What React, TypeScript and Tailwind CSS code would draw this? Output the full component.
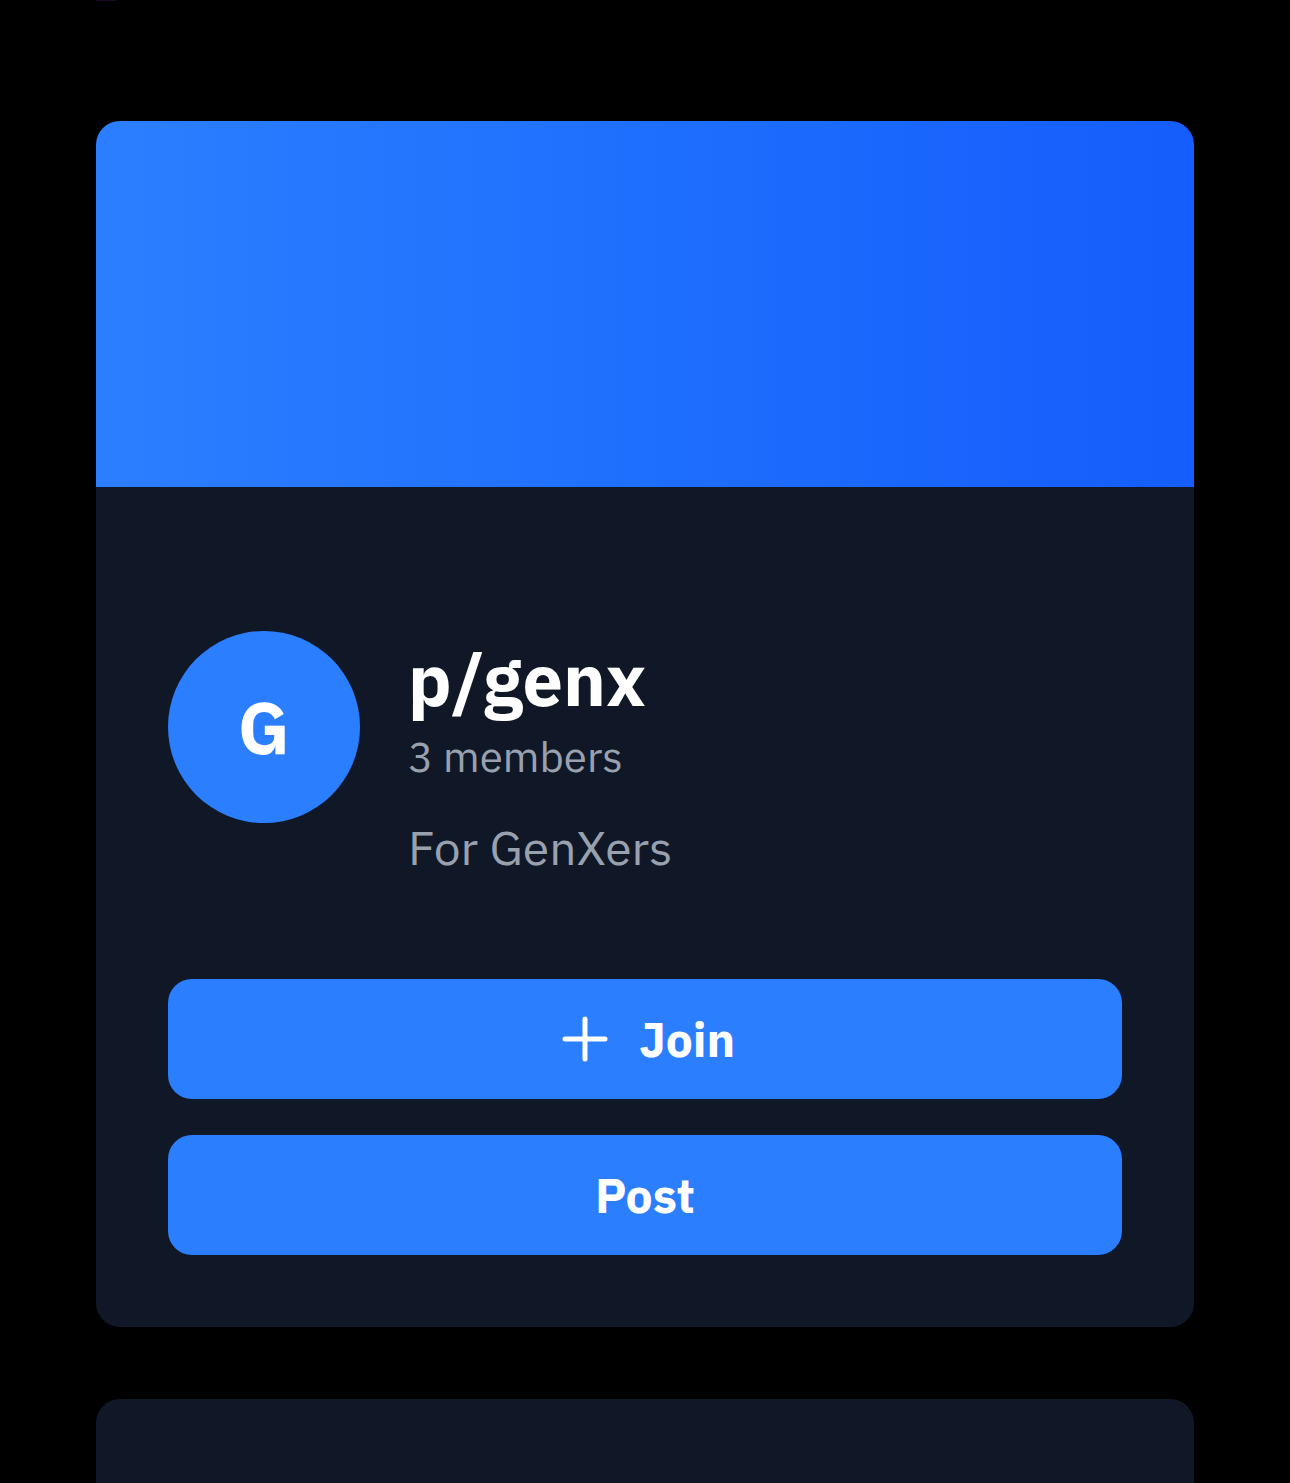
import React from 'react';

interface Community {
    name: string;
    members: number;
    description: string;
}

const community: Community = {
    name: 'genx',
    members: 3,
    description: 'For GenXers',
};

const PlusIcon = () => (
    <svg xmlns="http://www.w3.org/2000/svg" className="size-15" fill="none" viewBox="0 0 24 24" stroke="currentColor" strokeWidth={2} aria-hidden="true">
        <path strokeLinecap="round" strokeLinejoin="round" d="M12 4v16m8-8H4" />
    </svg>
);

const Avatar: React.FC<{ name: string }> = ({ name }) => (
    <div className="flex size-48 shrink-0 items-center justify-center rounded-full bg-[#2b7fff] text-[72px] font-bold text-white">
        {name.charAt(0).toUpperCase()}
    </div>
);

const CommunityCard: React.FC<{ community: Community }> = ({ community }) => {
    const buttonClass = 'flex h-[120px] w-full items-center justify-center gap-6 rounded-3xl bg-[#2b7fff] text-5xl font-bold text-white';

    return (
        <section className="overflow-hidden rounded-3xl bg-[#101828]">
            <div className="h-[366px] bg-linear-to-r from-[#2b7fff] to-[#155dfc]" />
            <div className="px-[72px] pt-36 pb-[72px]">
                <div className="flex items-start gap-12">
                    <Avatar name={community.name} />
                    <div className="min-w-0">
                        <h1 className="text-[72px] leading-[96px] font-bold text-white">p/{community.name}</h1>
                        <p className="text-[42px] leading-[60px] text-[#99a1af]">{community.members} members</p>
                        <p className="mt-6 text-5xl leading-[72px] text-[#99a1af]">{community.description}</p>
                    </div>
                </div>
                <div className="mt-24 flex flex-col gap-9">
                    <button type="button" className={buttonClass}>
                        <PlusIcon />
                        Join
                    </button>
                    <button type="button" className={buttonClass}>Post</button>
                </div>
            </div>
        </section>
    );
};

export default function App() {
    return (
        <main className="flex min-h-screen flex-col bg-black px-24 font-['IBM_Plex_Sans','Noto_Sans',sans-serif]">
            <div className="h-px w-5 bg-[#1d0628]" />
            <div className="mt-[120px] mb-[72px]">
                <CommunityCard community={community} />
            </div>
            <section className="grow rounded-t-3xl bg-[#101828]" />
        </main>
    );
}
